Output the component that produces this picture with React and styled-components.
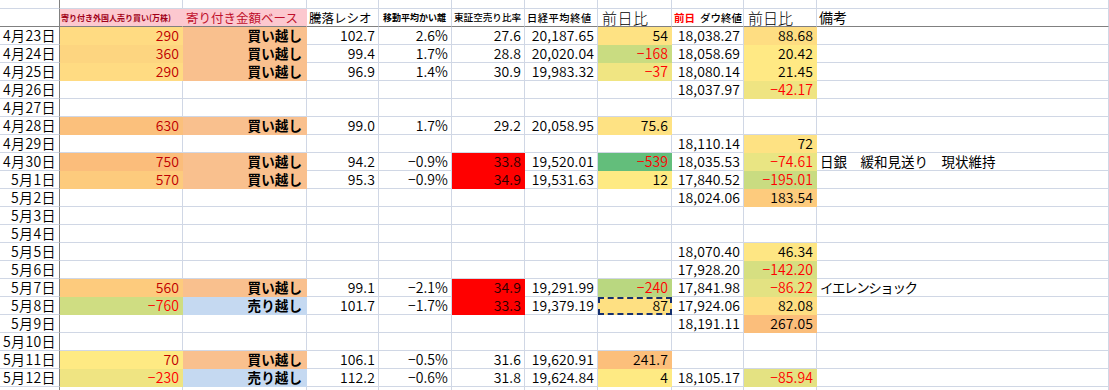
import React from "react";
import styled, { createGlobalStyle } from "styled-components";

const GlobalStyle = createGlobalStyle`
  body {
    margin: 0;
    background: #ffffff;
    font-family: "Noto Sans CJK JP", "Noto Sans", sans-serif;
  }
`;

const GRID = "#d0d7e5";
const DARK = "#808080";

const Sheet = styled.div`
  display: grid;
  grid-template-columns: 60px 123px 124px 72px 73px 73px 73px 74px 72px 73px 1fr;
  grid-template-rows: 9px 18px;
  grid-auto-rows: 18px;
  width: 1109px;
  height: 390px;
  overflow: hidden;
`;

const Cell = styled.div`
  box-sizing: border-box;
  display: flex;
  align-items: flex-end;
  justify-content: ${(p) => (p.$left ? "flex-start" : "flex-end")};
  padding: 0 3px 0 3px;
  background: ${(p) => p.$bg || "#ffffff"};
  border-right: 1px solid ${(p) => p.$bg || GRID};
  border-bottom: 1px solid ${(p) => p.$bg || GRID};
  color: ${(p) => p.$color || "#000000"};
  font-size: 14px;
  font-weight: 350;
  line-height: 17px;
  white-space: nowrap;
  letter-spacing: 0.1px;
`;

const DateCell = styled(Cell)`
  border-right: 1px solid ${DARK};
  padding-right: 3px;
  letter-spacing: 0.4px;
`;

const HeadCell = styled(Cell)`
  border-bottom: 1px solid ${DARK};
  justify-content: flex-start;
  padding-left: ${(p) => p.$pad || 2}px;
  font-size: ${(p) => p.$size || 14}px;
  font-weight: ${(p) => p.$weight || 400};
  letter-spacing: ${(p) => p.$ls || 0}px;
`;

const HeadDate = styled(HeadCell)`
  border-right: 1px solid ${DARK};
`;

const TopDate = styled(Cell)`
  border-right: 1px solid ${DARK};
`;

const Trade = styled(Cell)`
  font-weight: 700;
  font-size: 13.5px;
  padding-right: 4px;
`;

const Note = styled(Cell)`
  font-weight: 400;
  font-size: 13.5px;
  letter-spacing: ${(p) => p.$ls || 0}px;
`;

const Selected = styled(Cell)`
  outline: 2px dashed #16306e;
  outline-offset: -2px;
`;

const RedWord = styled.span`
  color: #ff0000;
  font-weight: 700;
  margin-right: 5px;
`;

const BUY = "#f9c08e";
const SELL = "#c5d9f1";
const HOT = "#ff0000";

const rows = [
  { d: "4月23日", f: ["290", "#ffdb82"], t: "買", r: "102.7", m: "2.6%", s: "27.6", n: "20,187.65", nd: ["54", "#fee283"], dw: "18,038.27", dd: ["88.68", "#fedd82"] },
  { d: "4月24日", f: ["360", "#fdd580"], t: "買", r: "99.4", m: "1.7%", s: "28.8", n: "20,020.04", nd: ["−168", "#c9dc81"], dw: "18,058.69", dd: ["20.42", "#ffe984"] },
  { d: "4月25日", f: ["290", "#ffdb82"], t: "買", r: "96.9", m: "1.4%", s: "30.9", n: "19,983.32", nd: ["−37", "#f0e582"], dw: "18,080.14", dd: ["21.45", "#ffe984"] },
  { d: "4月26日", dw: "18,037.97", dd: ["−42.17", "#efe482"] },
  { d: "4月27日" },
  { d: "4月28日", f: ["630", "#fbc07c"], t: "買", r: "99.0", m: "1.7%", s: "29.2", n: "20,058.95", nd: ["75.6", "#fee283"] },
  { d: "4月29日", dw: "18,110.14", dd: ["72", "#fee283"] },
  { d: "4月30日", f: ["750", "#fbbd7b"], t: "買", r: "94.2", m: "−0.9%", s: "33.8", hot: true, n: "19,520.01", nd: ["−539", "#63be7b"], dw: "18,035.53", dd: ["−74.61", "#e9e583"], note: "日銀　緩和見送り　現状維持" },
  { d: "5月1日", f: ["570", "#fdcb7d"], t: "買", r: "95.3", m: "−0.9%", s: "34.9", hot: true, n: "19,531.63", nd: ["12", "#feea83"], dw: "17,840.52", dd: ["−195.01", "#c9dc81"] },
  { d: "5月2日", dw: "18,024.06", dd: ["183.54", "#fdcb7d"] },
  { d: "5月3日" },
  { d: "5月4日" },
  { d: "5月5日", dw: "18,070.40", dd: ["46.34", "#fee683"] },
  { d: "5月6日", dw: "17,928.20", dd: ["−142.20", "#d6df81"] },
  { d: "5月7日", f: ["560", "#fdcb7d"], t: "買", r: "99.1", m: "−2.1%", s: "34.9", hot: true, n: "19,291.99", nd: ["−240", "#b9d780"], dw: "17,841.98", dd: ["−86.22", "#e3e282"], note: "イエレンショック", kana: true },
  { d: "5月8日", f: ["−760", "#cfdd82"], t: "売", r: "101.7", m: "−1.7%", s: "33.3", hot: true, n: "19,379.19", nd: ["87", "#fee082"], sel: true, dw: "17,924.06", dd: ["82.08", "#fede82"] },
  { d: "5月9日", dw: "18,191.11", dd: ["267.05", "#fbbe7b"] },
  { d: "5月10日" },
  { d: "5月11日", f: ["70", "#feea83"], t: "買", r: "106.1", m: "−0.5%", s: "31.6", n: "19,620.91", nd: ["241.7", "#fcbf7b"] },
  { d: "5月12日", f: ["−230", "#efe482"], t: "売", r: "112.2", m: "−0.6%", s: "31.8", n: "19,624.84", nd: ["4", "#feea83"], dw: "18,105.17", dd: ["−85.94", "#e4e282"] },
  { d: "5月13日" },
];

const neg = (v) => v && v.startsWith("−");

const Row = ({ row }) => {
  const fColor = row.f ? (neg(row.f[0]) ? "#ff0000" : "#c00000") : undefined;
  const NdCell = row.sel ? Selected : Cell;
  return (
    <>
      <DateCell>{row.d}</DateCell>
      <Cell $bg={row.f && row.f[1]} $color={fColor}>{row.f && row.f[0]}</Cell>
      {row.t ? (
        <Trade $bg={row.t === "買" ? BUY : SELL}>{row.t === "買" ? "買い越し" : "売り越し"}</Trade>
      ) : (
        <Cell />
      )}
      <Cell>{row.r}</Cell>
      <Cell>{row.m}</Cell>
      <Cell $bg={row.hot ? HOT : undefined} $color={row.hot ? "#2a0000" : undefined}>{row.s}</Cell>
      <Cell>{row.n}</Cell>
      <NdCell $bg={row.nd && row.nd[1]} $color={row.nd && neg(row.nd[0]) ? "#ff0000" : undefined}>
        {row.nd && row.nd[0]}
      </NdCell>
      <Cell>{row.dw}</Cell>
      <Cell $bg={row.dd && row.dd[1]} $color={row.dd && neg(row.dd[0]) ? "#ff0000" : undefined}>
        {row.dd && row.dd[0]}
      </Cell>
      <Note $left $ls={row.kana ? -1.4 : 0}>{row.note}</Note>
    </>
  );
};

const PINK = "#fcc8cf";

export default function App() {
  return (
    <>
      <GlobalStyle />
      <Sheet>
        <TopDate />
        {Array.from({ length: 10 }).map((_, i) => (
          <Cell key={i} />
        ))}

        <HeadDate />
        <HeadCell $bg={PINK} $size={8} $weight={700} $color="#a00018" $pad={1}>
          寄り付き外国人売り買い(万株)
        </HeadCell>
        <HeadCell $bg={PINK} $size={12.5} $color="#c0102c" $pad={3}>
          寄り付き金額ベース
        </HeadCell>
        <HeadCell $size={12.5}>騰落レシオ</HeadCell>
        <HeadCell $size={9} $weight={700} $pad={4}>移動平均かい離</HeadCell>
        <HeadCell $size={9.6} $weight={500}>東証空売り比率</HeadCell>
        <HeadCell $size={10.2} $weight={500} $ls={0.6}>日経平均終値</HeadCell>
        <HeadCell $size={15} $weight={300} $pad={4} $ls={0.5}>前日比</HeadCell>
        <HeadCell $size={10.5} $weight={500}>
          <RedWord>前日</RedWord>ダウ終値
        </HeadCell>
        <HeadCell $size={15} $weight={300} $pad={4}>前日比</HeadCell>
        <HeadCell $size={14}>備考</HeadCell>

        {rows.map((row) => (
          <Row key={row.d} row={row} />
        ))}
      </Sheet>
    </>
  );
}
